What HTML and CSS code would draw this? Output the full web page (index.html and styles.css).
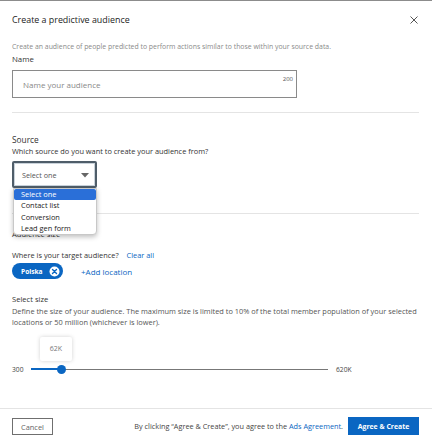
FILE: index.html
```html
<!DOCTYPE html>
<html lang="en">
<head>
<meta charset="utf-8">
<title>Create a predictive audience</title>
<link rel="stylesheet" href="styles.css">
</head>
<body>
<div class="modal">
  <header class="modal-header">
    <h1 class="title">Create a predictive audience</h1>
    <button class="close" aria-label="Close">
      <svg width="8" height="8" viewBox="0 0 8 8"><path d="M0.5 0.5 L7.5 7.5 M7.5 0.5 L0.5 7.5" stroke="#555" stroke-width="1" fill="none"/></svg>
    </button>
  </header>
  <main class="modal-body">
    <p class="desc">Create an audience of people predicted to perform actions similar to those within your source data.</p>
    <label class="label">Name</label>
    <div class="input">
      <span class="placeholder">Name your audience</span>
      <span class="counter">200</span>
    </div>
    <hr class="divider first">
    <div class="label source-title">Source</div>
    <div class="label q">Which source do you want to create your audience from?</div>
    <div class="select-wrap">
      <div class="select">
        <span>Select one</span>
        <svg class="caret" width="8" height="5" viewBox="0 0 8 5"><path d="M0 0 H8 L4 4.5 Z" fill="#666"/></svg>
      </div>
      <ul class="menu">
        <li class="active">Select one</li>
        <li>Contact list</li>
        <li>Conversion</li>
        <li>Lead gen form</li>
      </ul>
    </div>
    <hr class="divider second">
    <div class="label size-title">Audience size</div>
    <div class="label where">Where is your target audience? <a class="link clear">Clear all</a></div>
    <div class="chips">
      <span class="chip">Polska
        <svg width="11" height="11" viewBox="0 0 11 11"><circle cx="5.5" cy="5.5" r="5" fill="#fff"/><path d="M3.5 3.5 L7.5 7.5 M7.5 3.5 L3.5 7.5" stroke="#0a66c2" stroke-width="1.4" stroke-linecap="round"/></svg>
      </span>
      <a class="link add">+Add location</a>
    </div>
    <div class="label select-size">Select size</div>
    <p class="size-desc">Define the size of your audience. The maximum size is limited to 10% of the total member population of your selected locations or 50 million (whichever is lower).</p>
    <div class="slider">
      <span class="min">300</span>
      <div class="track">
        <div class="fill" style="width:30px"></div>
        <div class="thumb" style="left:30px"></div>
        <div class="tip">62K</div>
      </div>
      <span class="max">620K</span>
    </div>
  </main>
  <footer class="modal-footer">
    <button class="btn-cancel">Cancel</button>
    <div class="footer-right">
      <span class="terms">By clicking “Agree &amp; Create”, you agree to the <a class="link">Ads Agreement</a>.</span>
      <button class="btn-primary">Agree &amp; Create</button>
    </div>
  </footer>
</div>
</body>
</html>
```
FILE: styles.css
```css
* { box-sizing: border-box; }
html, body { margin: 0; padding: 0; background: #fff; }
body {
  font-family: "Open Sans", "Noto Sans", "Liberation Sans", sans-serif;
  color: #333;
}
.modal {
  width: 432px;
  height: 443px;
  border-top: 1px solid #8c8c8c;
  display: flex;
  flex-direction: column;
  background: #fff;
}
.modal-header {
  display: flex;
  justify-content: space-between;
  align-items: center;
  padding: 10px 14px 0 12px;
  height: 27px;
}
.title {
  margin: 0;
  font-size: 8.9px;
  font-weight: 400;
  line-height: 16px;
  color: #222;
}
.close {
  border: 0;
  background: none;
  padding: 0;
  width: 8px;
  height: 8px;
  display: flex;
}
.modal-body {
  flex: 1;
  padding: 0 13px 0 12px;
  position: relative;
}
.desc {
  margin: 14px 0 0;
  font-size: 6.9px;
  line-height: 10px;
  color: #8a8a8a;
  white-space: nowrap;
}
.label {
  display: block;
  font-size: 7.4px;
  line-height: 10px;
  color: #333;
}
.desc + .label { margin-top: 2px; font-size: 7.8px; }
.input {
  margin-top: 6px;
  width: 285px;
  height: 28px;
  border: 1px solid #8a8a8a;
  position: relative;
  display: flex;
  align-items: center;
  padding-left: 10px;
}
.placeholder {
  font-size: 8px;
  color: #888;
}
.counter {
  position: absolute;
  right: 3px;
  top: 4px;
  font-size: 6px;
  color: #555;
}
.divider {
  border: 0;
  border-top: 1px solid #e4e4e4;
  margin: 14px 0 0;
  height: 0;
}
.source-title { margin-top: 22px; font-size: 8.3px; }
.q { margin-top: 1px; }
.select-wrap {
  position: relative;
  margin-top: 5px;
  width: 85px;
}
.select {
  width: 85px;
  height: 27px;
  border: 2px solid #4f5d69;
  border-radius: 2px;
  display: flex;
  align-items: center;
  justify-content: space-between;
  padding: 0 6px 0 8px;
  font-size: 7.2px;
  color: #555;
  box-shadow: inset 0 0 0 1px #c9d2da;
}
.caret { margin-top: 1px; }
.menu {
  position: absolute;
  top: 27px;
  left: 1px;
  width: 84px;
  margin: 0;
  padding: 0;
  list-style: none;
  background: #fff;
  border: 1px solid #c8c8c8;
  border-radius: 0 0 4px 4px;
  box-shadow: 0 2px 5px rgba(0,0,0,0.25);
  z-index: 5;
  overflow: hidden;
}
.menu li {
  font-size: 7.4px;
  line-height: 11.3px;
  padding-left: 7px;
  color: #222;
}
.menu li.active {
  background: #2a6fd8;
  color: #fff;
  border-radius: 2px;
}
.divider.second { margin-top: 25px; }
.size-title { margin-top: 15px; font-size: 7.6px; }
.where { margin-top: 11px; }
.link { color: #0a66c2; text-decoration: none; }
.clear { margin-left: 6px; }
.chips {
  display: flex;
  align-items: center;
  margin-top: 3px;
  gap: 18px;
}
.chip {
  display: inline-flex;
  align-items: center;
  gap: 6px;
  height: 16px;
  padding: 0 3px 0 9px;
  background: #0a66c2;
  color: #fff;
  border-radius: 8px;
  font-size: 6.6px;
  font-weight: 700;
  width: 51px;
}
.add { font-size: 8px; }
.select-size { margin-top: 15px; font-size: 7.6px; }
.size-desc {
  margin: 2px 0 0;
  font-size: 7.4px;
  line-height: 11px;
  color: #555;
}
.slider {
  display: flex;
  align-items: center;
  margin-top: 36px;
  height: 10px;
}
.min, .max {
  font-size: 6.7px;
  color: #444;
}
.min { width: 19px; }
.max { margin-left: 8px; }
.track {
  position: relative;
  width: 297px;
  height: 1px;
  background: #777;
}
.fill {
  position: absolute;
  left: 0;
  top: -0.5px;
  height: 2px;
  background: #0a66c2;
}
.thumb {
  position: absolute;
  top: -4px;
  width: 9px;
  height: 9px;
  margin-left: -4.5px;
  border-radius: 50%;
  background: #0a66c2;
}
.tip {
  position: absolute;
  left: 9px;
  top: -32px;
  width: 32px;
  height: 24px;
  background: #fff;
  box-shadow: 0 0 4px rgba(0,0,0,0.18);
  border-radius: 2px;
  display: flex;
  align-items: center;
  justify-content: center;
  font-size: 7px;
  color: #777;
}
.modal-footer {
  height: 35px;
  border-top: 1px solid #e4e4e4;
  display: flex;
  justify-content: space-between;
  align-items: flex-start;
  padding: 8px 13px 0 12px;
}
.btn-cancel {
  width: 41px;
  height: 17px;
  border: 1px solid #6f6f6f;
  background: #fff;
  font-family: inherit;
  font-size: 7.4px;
  color: #666;
  padding: 0;
  margin-top: 1px;
}
.footer-right {
  display: flex;
  align-items: center;
  gap: 5px;
}
.terms {
  font-size: 7.3px;
  color: #444;
}
.btn-primary {
  width: 71px;
  height: 18px;
  border: 0;
  background: #0a66c2;
  color: #fff;
  font-family: inherit;
  font-size: 6.9px;
  font-weight: 700;
  padding: 0;
}
```
